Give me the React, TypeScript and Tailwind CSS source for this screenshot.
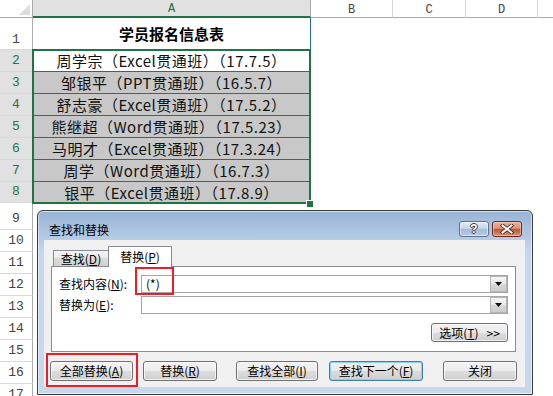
import React from "react";

type Row = { n: number; h: string; sel: boolean; text?: string; fill?: boolean; title?: boolean; align: string };

const rows: Row[] = [
  { n: 1, h: "h-[32px]", sel: false, title: true, align: "items-end pb-[1px]" },
  { n: 2, h: "h-[22px]", sel: true, text: "周学宗（Excel贯通班）（17.7.5）", fill: false, align: "items-center" },
  { n: 3, h: "h-[22px]", sel: true, text: "邹银平（PPT贯通班）（16.5.7）", fill: true, align: "items-center" },
  { n: 4, h: "h-[22px]", sel: true, text: "舒志豪（Excel贯通班）（17.5.2）", fill: true, align: "items-center" },
  { n: 5, h: "h-[22px]", sel: true, text: "熊继超（Word贯通班）（17.5.23）", fill: true, align: "items-center" },
  { n: 6, h: "h-[22px]", sel: true, text: "马明才（Excel贯通班）（17.3.24）", fill: true, align: "items-center" },
  { n: 7, h: "h-[22px]", sel: true, text: "周学（Word贯通班）（16.7.3）", fill: true, align: "items-center" },
  { n: 8, h: "h-[21px]", sel: true, text: "银平（Excel贯通班）（17.8.9）", fill: true, align: "items-center" },
  { n: 9, h: "h-[27px]", sel: false, align: "items-end pb-[2px]" },
  { n: 10, h: "h-[22px]", sel: false, align: "items-center" },
  { n: 11, h: "h-[22px]", sel: false, align: "items-center" },
  { n: 12, h: "h-[22px]", sel: false, align: "items-center" },
  { n: 13, h: "h-[22px]", sel: false, align: "items-center" },
  { n: 14, h: "h-[22px]", sel: false, align: "items-center" },
  { n: 15, h: "h-[22px]", sel: false, align: "items-center" },
  { n: 16, h: "h-[22px]", sel: false, align: "items-center" },
  { n: 17, h: "h-[22px]", sel: false, align: "items-center" },
];

const mono = "font-['Liberation_Mono','DejaVu_Sans_Mono',monospace]";
const cjk = "font-['Noto_Sans_CJK_SC','Noto_Sans',sans-serif]";
const btn =
  "flex items-center justify-center rounded-[3px] border border-[#707070] bg-[linear-gradient(180deg,#f3f3f3_0%,#ebebeb_50%,#dddddd_50%,#cfcfcf_100%)] text-[12px] leading-none text-black shadow-[inset_0_0_0_1px_rgba(255,255,255,0.7)]";

function Combo({ value }: { value?: string }) {
  return (
    <div className="flex h-[18px] w-[367px] items-stretch border border-[#a5a5a5] bg-white">
      <div className="flex flex-1 items-center pl-[4px] text-[12px] leading-none">{value}</div>
      <div className="flex w-[17px] items-center justify-center border border-[#b4b4b4] bg-[linear-gradient(180deg,#f6f6f6_0%,#e8e8e8_50%,#d9d9d9_50%,#cdcdcd_100%)]">
        <svg width="7" height="4" viewBox="0 0 7 4">
          <path d="M0 0 H7 L3.5 4 Z" fill="#111" />
        </svg>
      </div>
    </div>
  );
}

export default function App() {
  return (
    <div className="relative h-[396px] w-[553px] overflow-hidden bg-white">
      {/* column header */}
      <div className="flex h-[18px]">
        <div className="flex w-[33px] shrink-0 items-end justify-end border-r border-b border-r-[#ababab] border-b-[#ababab] pb-[2px] pr-[2px]">
          <svg width="11" height="11" viewBox="0 0 11 11">
            <path d="M11 0 V11 H0 Z" fill="#dcdcdc" />
          </svg>
        </div>
        <div className={`flex w-[278px] shrink-0 items-center justify-center border-r border-r-[#ababab] border-b-2 border-b-[#217346] bg-[#e1e1e1] pt-[2px] text-[12px] text-[#217346] ${mono}`}>A</div>
        <div className={`flex w-[82px] shrink-0 items-center justify-center border-r border-b border-r-[#d5d5d5] border-b-[#ababab] pt-[2px] text-[12px] text-[#444] ${mono}`}>B</div>
        <div className={`flex w-[73px] shrink-0 items-center justify-center border-r border-b border-r-[#d5d5d5] border-b-[#ababab] pt-[2px] text-[12px] text-[#444] ${mono}`}>C</div>
        <div className={`flex w-[72px] shrink-0 items-center justify-center border-r border-b border-r-[#d5d5d5] border-b-[#ababab] pt-[2px] text-[12px] text-[#444] ${mono}`}>D</div>
        <div className="flex-1 border-b border-b-[#ababab]" />
      </div>

      {/* rows */}
      {rows.map((r) => (
        <div key={r.n} className={`flex ${r.h}`}>
          <div
            className={`flex w-[33px] shrink-0 justify-center border-r border-b border-r-[#ababab] border-b-[#d8d8d8] text-[13px] leading-[16px] ${mono} ${r.align} ${
              r.sel ? "bg-[#e1e1e1] text-[#217346]" : "bg-white text-[#444]"
            }`}
          >
            {r.n}
          </div>
          {r.title ? (
            <div className={`flex w-[278px] shrink-0 items-center justify-center border-r border-r-[#2a64a8] pt-[1px] text-[15px] font-bold text-black ${cjk}`}>
              学员报名信息表
            </div>
          ) : r.text ? (
            <div
              className={`flex w-[278px] shrink-0 items-center justify-center border-r border-b border-r-[#2a64a8] border-b-[#2a64a8] text-[15px] leading-none tracking-[0.5px] text-[#111] ${cjk} ${
                r.fill ? "bg-[#c8c8c8]" : "bg-white"
              }`}
            >
              {r.text}
            </div>
          ) : (
            <div className="w-[278px] shrink-0" />
          )}
          <div className="flex-1" />
        </div>
      ))}

      {/* selection frame */}
      <div className="absolute left-[32px] top-[49px] h-[155px] w-[279px] border-2 border-[#217346]" />
      <div className="absolute left-[306px] top-[200px] h-[8px] w-[8px] border border-white bg-[#217346]" />

      {/* dialog */}
      <div className={`absolute left-[37px] top-[210px] flex h-[185px] w-[496px] flex-col rounded-t-[6px] border border-[#3b3b3b] bg-[linear-gradient(180deg,#97b3d5_0px,#b6cbe5_28px,#c4d7ec_40px,#c6d8ec_100%)] shadow-[inset_0_0_0_1px_rgba(255,255,255,0.55)] ${cjk}`}>
        {/* title bar */}
        <div className="flex h-[29px] shrink-0 items-start pl-[11px] pr-[10px]">
          <div className="pt-[11px] text-[12px] leading-[16px] text-black">查找和替换</div>
          <div className="ml-auto mt-[10px] flex gap-[3px]">
            <div className="flex h-[16px] w-[30px] items-center justify-center rounded-[3px] border border-[#5f7390] bg-[linear-gradient(180deg,#e2ebf5_0%,#c7d7ea_45%,#a7bedb_50%,#b3c8e2_100%)] shadow-[inset_0_0_0_1px_rgba(255,255,255,0.5)]">
              <span className="font-['Liberation_Sans',sans-serif] text-[12px] font-bold leading-none text-white [text-shadow:1px_0_0_#3a3a3a,-1px_0_0_#3a3a3a,0_1px_0_#3a3a3a,0_-1px_0_#3a3a3a]">?</span>
            </div>
            <div className="flex h-[16px] w-[30px] items-center justify-center rounded-[3px] border border-[#6b2a22] bg-[linear-gradient(180deg,#ebb29c_0%,#dd917a_45%,#b65d38_52%,#c46c44_70%,#d9977b_100%)] shadow-[inset_0_0_0_1px_rgba(255,220,200,0.5)]">
              <svg width="14" height="10" viewBox="0 0 14 10">
                <path d="M2.5 1.5 L11.5 8.5 M11.5 1.5 L2.5 8.5" stroke="#3b2624" strokeWidth="3.6" strokeLinecap="square" />
                <path d="M2.5 1.5 L11.5 8.5 M11.5 1.5 L2.5 8.5" stroke="#ffffff" strokeWidth="2" strokeLinecap="square" />
              </svg>
            </div>
          </div>
        </div>

        {/* client area */}
        <div className="ml-[6px] flex h-[147px] w-[481px] shrink-0 flex-col bg-[#f0f0f0] pl-[7px] pt-[6px] text-black">
          {/* tabs */}
          <div className="ml-[2px] flex h-[20px] items-end">
            <div className="flex h-[16px] w-[55px] items-center justify-center border-t border-l border-[#898c95] bg-[linear-gradient(180deg,#f4f4f4_0%,#e9e9e9_50%,#dadada_50%,#d2d2d2_100%)] text-[12px] leading-none">
              查找(<u>D</u>)
            </div>
            <div className="relative z-10 -mb-[1px] flex h-[21px] w-[64px] items-center justify-center border-t border-l border-r border-[#898c95] bg-white pb-[1px] text-[12px] leading-none">
              替换(<u>P</u>)
            </div>
          </div>

          {/* panel */}
          <div className="flex h-[86px] w-[465px] flex-col border border-[#898c95] bg-white pl-[7px] pt-[8px]">
            <div className="flex h-[18px] items-center">
              <div className="w-[82px] text-[12px] leading-none">查找内容(<u>N</u>):</div>
              <Combo value="(*)" />
            </div>
            <div className="mt-[3px] flex h-[18px] items-center">
              <div className="w-[82px] text-[12px] leading-none">替换为(<u>E</u>):</div>
              <Combo />
            </div>
            <div className="mt-[9px] flex justify-end pr-[7px]">
              <div className={`${btn} h-[19px] w-[77px] gap-[8px]`}>
                <span>选项(<u>T</u>)</span>
                <span>&gt;&gt;</span>
              </div>
            </div>
          </div>

          {/* buttons */}
          <div className="mt-[9px] flex h-[20px]">
            <div className={`${btn} -ml-[1px] h-[20px] w-[83px]`}>全部替换(<u>A</u>)</div>
            <div className={`${btn} ml-[10px] h-[20px] w-[74px]`}>替换(<u>R</u>)</div>
            <div className={`${btn} ml-[19px] h-[20px] w-[82px]`}>查找全部(<u>I</u>)</div>
            <div className="ml-[11px] flex h-[20px] w-[94px] items-center justify-center rounded-[3px] border border-[#3c7fb1] bg-[linear-gradient(180deg,#f0f0f0_0%,#e8e8e8_50%,#dbdbdb_50%,#d0d0d0_100%)] text-[12px] leading-none shadow-[inset_0_0_0_1px_#8fd0f5]">
              查找下一个(<u>F</u>)
            </div>
            <div className={`${btn} ml-[20px] h-[20px] w-[74px]`}>关闭</div>
          </div>
        </div>
      </div>

      {/* red annotation boxes */}
      <div className="absolute left-[135px] top-[267px] h-[28px] w-[39px] border-2 border-[#ee1c24]" />
      <div className="absolute left-[46px] top-[353px] h-[34px] w-[92px] border-2 border-[#ee1c24]" />
    </div>
  );
}
